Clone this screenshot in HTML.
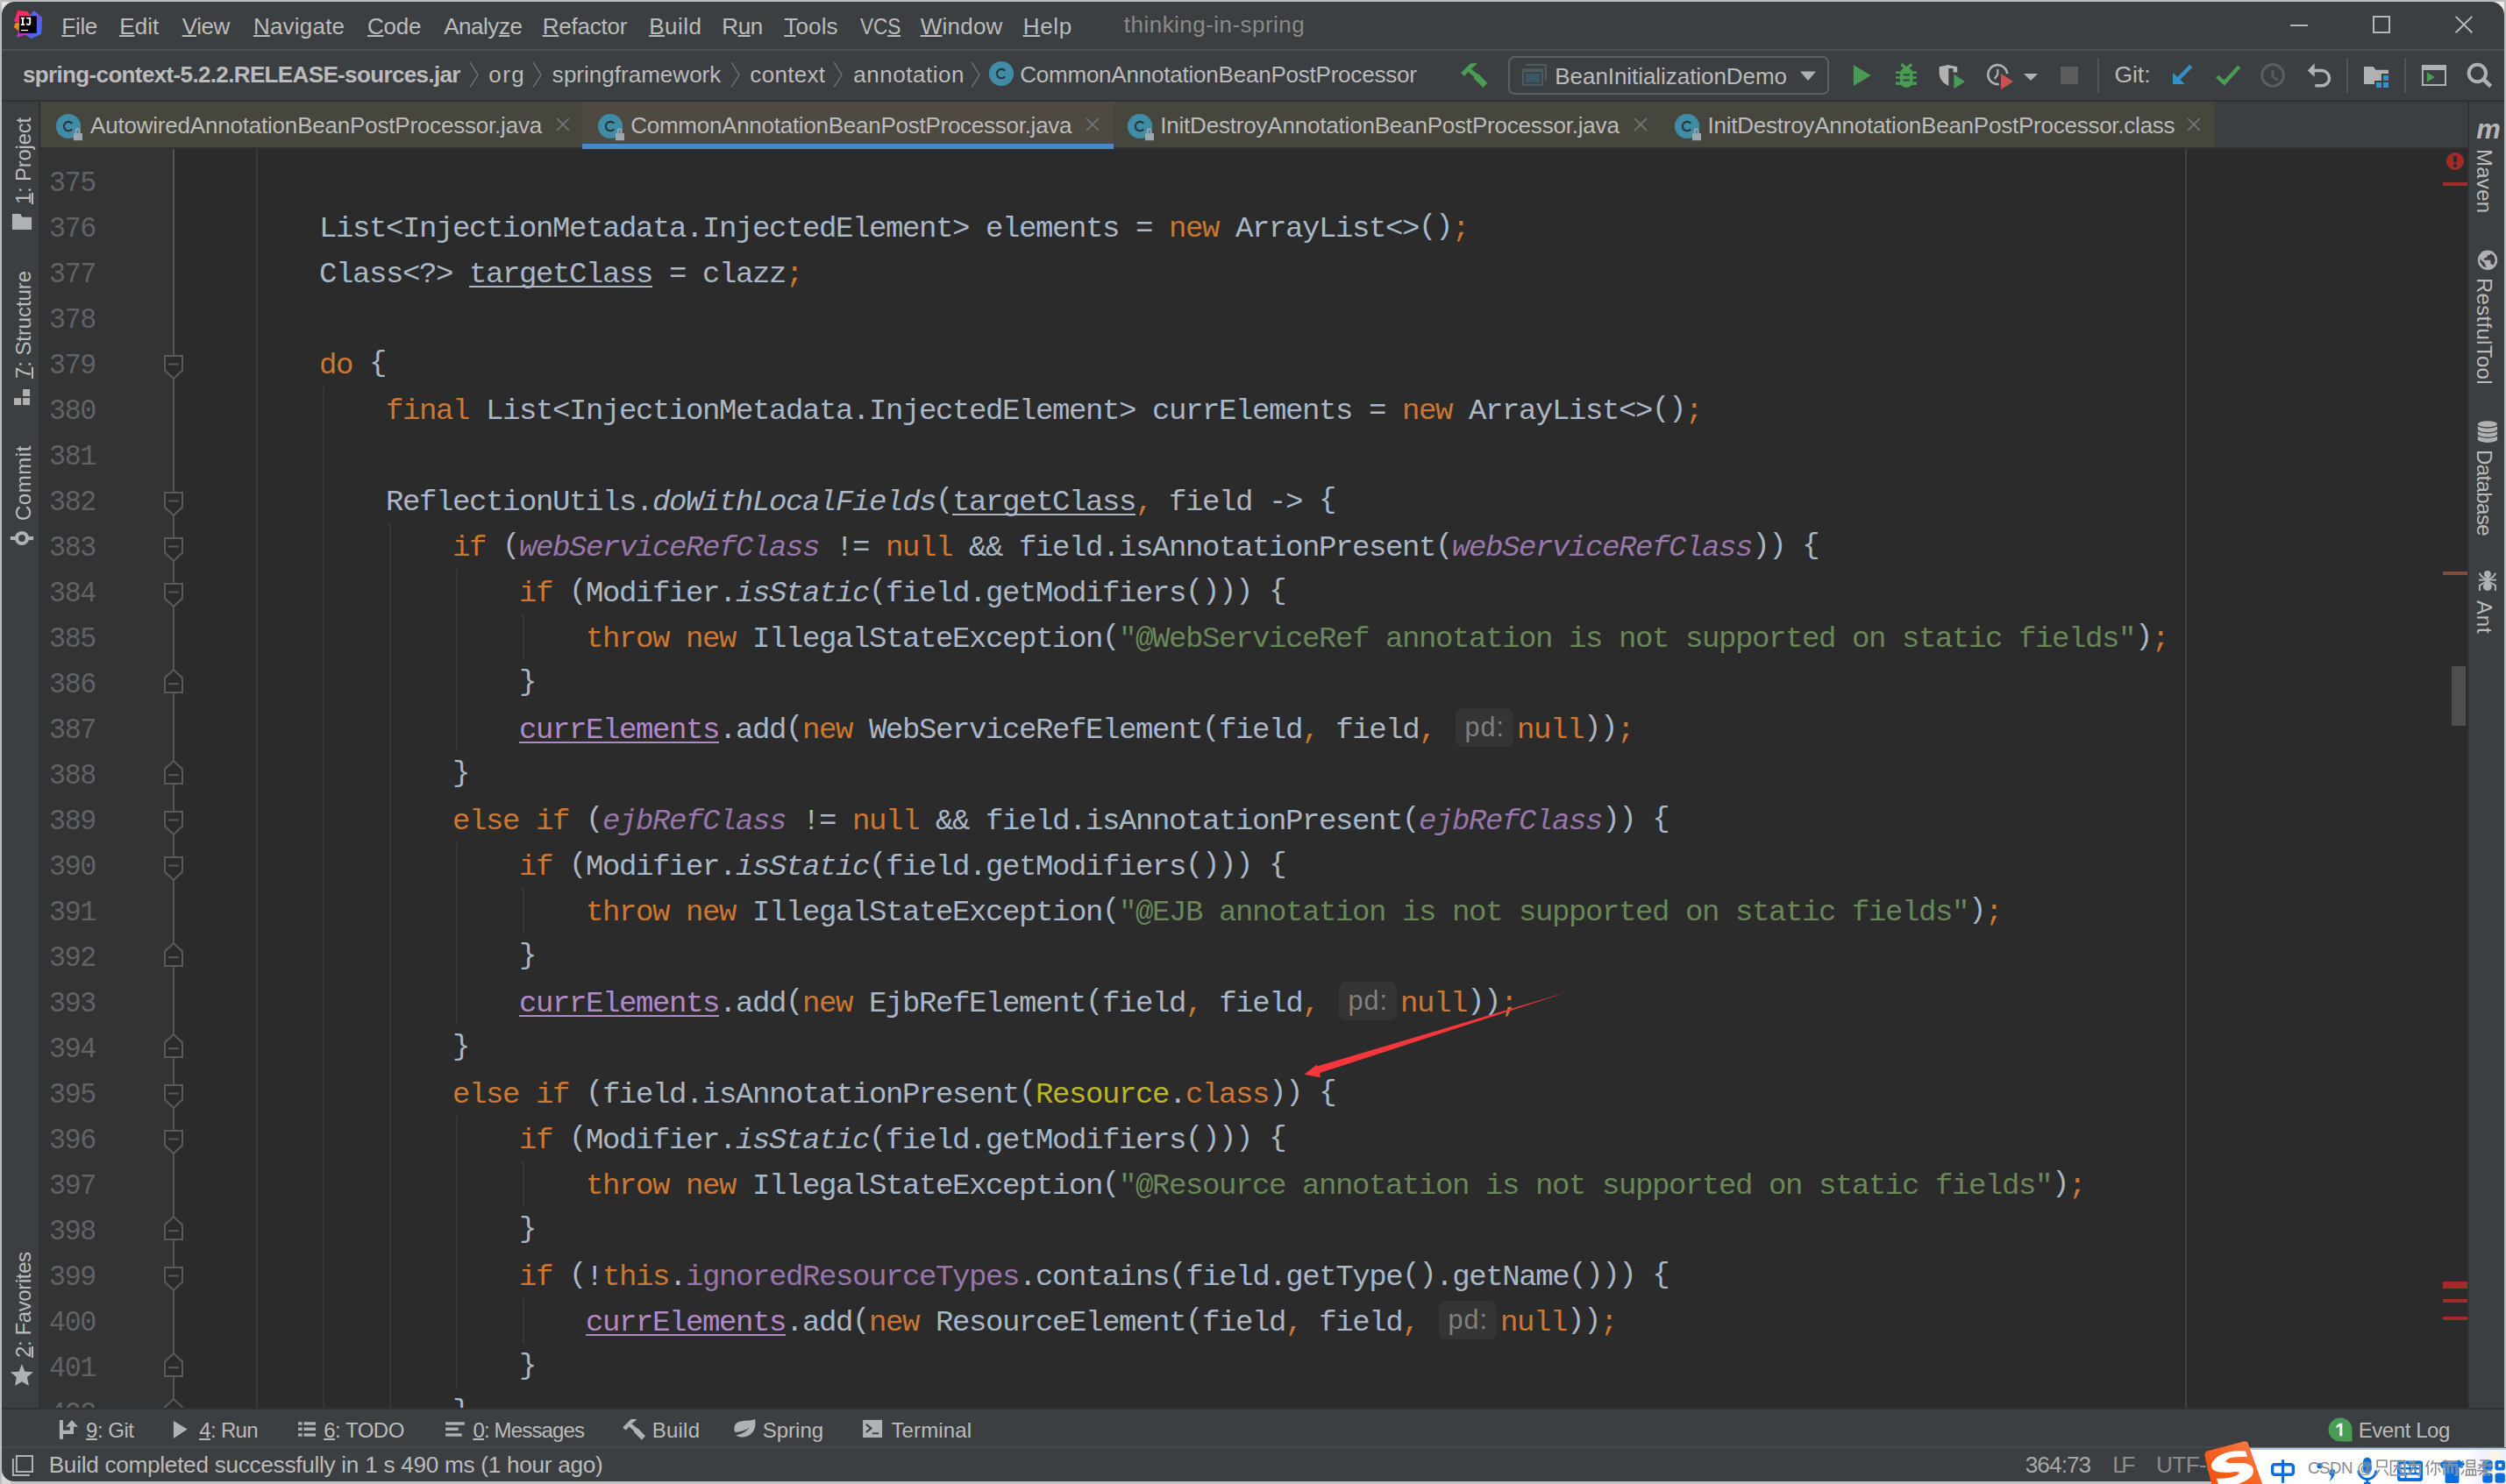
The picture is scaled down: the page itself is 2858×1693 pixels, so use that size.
<!DOCTYPE html>
<html><head><meta charset="utf-8"><title>IntelliJ IDEA</title>
<style>
html,body{margin:0;padding:0;}
body{width:2858px;height:1693px;overflow:hidden;background:#c4c4c4;position:relative;font-family:'Liberation Sans', sans-serif;}
#win{position:absolute;left:0;top:0;width:2858px;height:1693px;overflow:hidden;}
.t u{text-decoration:underline;text-decoration-thickness:2px;text-underline-offset:1px;text-decoration-skip-ink:none;}
.cl{position:absolute;height:52px;line-height:52px;font-family:'Liberation Mono', monospace;font-size:34px;letter-spacing:-1.4033px;white-space:pre;color:#a9b7c6;}
.cl i{font-style:italic;} .cl b{font-weight:400;position:relative;top:-3px;}
.k{color:#cc7832;} .s{color:#6a8759;} .f{color:#9876aa;} .a{color:#bbb529;}
.u{text-decoration:underline;text-decoration-thickness:1.700px;text-underline-offset:4px;text-decoration-skip-ink:none;}
.p{color:#b389c5;}
.ln{position:absolute;left:56px;height:52px;transform:scaleX(0.93);transform-origin:0 0;line-height:52px;font-family:'Liberation Mono', monospace;font-size:34px;letter-spacing:-1.4033px;color:#606366;}
.hint{position:absolute;height:44px;border-radius:8px;background:#343434;color:#808080;font-family:'Liberation Sans', sans-serif;font-size:30.500px;line-height:43px;text-align:center;letter-spacing:1px;text-indent:1px;}
</style></head><body>
<div id="win">
<div style="position:absolute;left:0px;top:0px;width:14px;height:14px;background:#e4e4e4;"></div>
<div style="position:absolute;left:2844px;top:0px;width:14px;height:14px;background:#ececec;"></div>
<div style="position:absolute;left:0px;top:1679px;width:12px;height:14px;background:#d8d8d8;"></div>
<div style="position:absolute;left:2px;top:2px;width:2854px;height:1688px;background:#3c3f41;border-radius:15px 15px 14px 14px;"></div>
<div style="position:absolute;left:0px;top:0px;width:2px;height:1693px;background:#bdbdbd;"></div>
<div style="position:absolute;left:0px;top:0px;width:2858px;height:2px;background:#bcbcbc;"></div>
<div style="position:absolute;left:2px;top:56px;width:2854px;height:2px;background:#515151;"></div>
<div style="position:absolute;left:2px;top:114px;width:2854px;height:2px;background:#323232;"></div>
<div style="position:absolute;left:46px;top:116px;width:2480px;height:54px;background:#46463f;"></div>
<div style="position:absolute;left:664px;top:116px;width:606px;height:54px;background:#4e4a41;"></div>
<div style="position:absolute;left:46px;top:168px;width:2768px;height:2px;background:#323232;"></div>
<div style="position:absolute;left:664px;top:164px;width:606px;height:6px;background:#4a88c7;"></div>
<div style="position:absolute;left:46px;top:170px;width:2768px;height:1436px;background:#2b2b2b;"></div>
<div style="position:absolute;left:46px;top:170px;width:151px;height:1436px;background:#313335;"></div>
<div style="position:absolute;left:44px;top:116px;width:2px;height:1490px;background:#323232;"></div>
<div style="position:absolute;left:2814px;top:116px;width:2px;height:1490px;background:#323232;"></div>
<div style="position:absolute;left:2px;top:1606px;width:2854px;height:2px;background:#323232;"></div>
<div style="position:absolute;left:2px;top:1650px;width:2854px;height:2px;background:#484848;"></div>
<div style="position:absolute;left:46px;top:170px;width:2768px;height:1436px;overflow:hidden;">
<div style="position:absolute;left:2446px;top:0px;width:2px;height:1436px;background:#424242;"></div>
<div style="position:absolute;left:151px;top:0px;width:2px;height:1436px;background:#555555;"></div>
<div style="position:absolute;left:246px;top:-249px;width:2px;height:2132px;background:#3a3a3a;"></div>
<div style="position:absolute;left:322px;top:271px;width:2px;height:1612px;background:#373737;"></div>
<div style="position:absolute;left:398px;top:427px;width:2px;height:1456px;background:#373737;"></div>
<div style="position:absolute;left:474px;top:479px;width:2px;height:208px;background:#373737;"></div>
<div style="position:absolute;left:474px;top:791px;width:2px;height:208px;background:#373737;"></div>
<div style="position:absolute;left:474px;top:1103px;width:2px;height:312px;background:#373737;"></div>
<div style="position:absolute;left:550px;top:531px;width:2px;height:52px;background:#373737;"></div>
<div style="position:absolute;left:550px;top:843px;width:2px;height:52px;background:#373737;"></div>
<div style="position:absolute;left:550px;top:1155px;width:2px;height:52px;background:#373737;"></div>
<div style="position:absolute;left:550px;top:1311px;width:2px;height:52px;background:#373737;"></div>
<div class="ln" style="top:13px;left:10.200000000000003px">375</div>
<div class="ln" style="top:65px;left:10.200000000000003px">376</div>
<div class="ln" style="top:117px;left:10.200000000000003px">377</div>
<div class="ln" style="top:169px;left:10.200000000000003px">378</div>
<div class="ln" style="top:221px;left:10.200000000000003px">379</div>
<div class="ln" style="top:273px;left:10.200000000000003px">380</div>
<div class="ln" style="top:325px;left:10.200000000000003px">381</div>
<div class="ln" style="top:377px;left:10.200000000000003px">382</div>
<div class="ln" style="top:429px;left:10.200000000000003px">383</div>
<div class="ln" style="top:481px;left:10.200000000000003px">384</div>
<div class="ln" style="top:533px;left:10.200000000000003px">385</div>
<div class="ln" style="top:585px;left:10.200000000000003px">386</div>
<div class="ln" style="top:637px;left:10.200000000000003px">387</div>
<div class="ln" style="top:689px;left:10.200000000000003px">388</div>
<div class="ln" style="top:741px;left:10.200000000000003px">389</div>
<div class="ln" style="top:793px;left:10.200000000000003px">390</div>
<div class="ln" style="top:845px;left:10.200000000000003px">391</div>
<div class="ln" style="top:897px;left:10.200000000000003px">392</div>
<div class="ln" style="top:949px;left:10.200000000000003px">393</div>
<div class="ln" style="top:1001px;left:10.200000000000003px">394</div>
<div class="ln" style="top:1053px;left:10.200000000000003px">395</div>
<div class="ln" style="top:1105px;left:10.200000000000003px">396</div>
<div class="ln" style="top:1157px;left:10.200000000000003px">397</div>
<div class="ln" style="top:1209px;left:10.200000000000003px">398</div>
<div class="ln" style="top:1261px;left:10.200000000000003px">399</div>
<div class="ln" style="top:1313px;left:10.200000000000003px">400</div>
<div class="ln" style="top:1365px;left:10.200000000000003px">401</div>
<div class="ln" style="top:1417px;left:10.200000000000003px">402</div>
<svg style="position:absolute;left:141px;top:235px;" width="22" height="29" viewBox="0 0 22 29"><polygon points="1,1 21,1 21,17.5 11,27 1,17.5" fill="#2b2b2b" stroke="#5a5a5a" stroke-width="2"/><rect x="5.200" y="9.500" width="11.600" height="2" fill="#5a5a5a"/></svg>
<svg style="position:absolute;left:141px;top:391px;" width="22" height="29" viewBox="0 0 22 29"><polygon points="1,1 21,1 21,17.5 11,27 1,17.5" fill="#2b2b2b" stroke="#5a5a5a" stroke-width="2"/><rect x="5.200" y="9.500" width="11.600" height="2" fill="#5a5a5a"/></svg>
<svg style="position:absolute;left:141px;top:443px;" width="22" height="29" viewBox="0 0 22 29"><polygon points="1,1 21,1 21,17.5 11,27 1,17.5" fill="#2b2b2b" stroke="#5a5a5a" stroke-width="2"/><rect x="5.200" y="9.500" width="11.600" height="2" fill="#5a5a5a"/></svg>
<svg style="position:absolute;left:141px;top:495px;" width="22" height="29" viewBox="0 0 22 29"><polygon points="1,1 21,1 21,17.5 11,27 1,17.5" fill="#2b2b2b" stroke="#5a5a5a" stroke-width="2"/><rect x="5.200" y="9.500" width="11.600" height="2" fill="#5a5a5a"/></svg>
<svg style="position:absolute;left:141px;top:755px;" width="22" height="29" viewBox="0 0 22 29"><polygon points="1,1 21,1 21,17.5 11,27 1,17.5" fill="#2b2b2b" stroke="#5a5a5a" stroke-width="2"/><rect x="5.200" y="9.500" width="11.600" height="2" fill="#5a5a5a"/></svg>
<svg style="position:absolute;left:141px;top:807px;" width="22" height="29" viewBox="0 0 22 29"><polygon points="1,1 21,1 21,17.5 11,27 1,17.5" fill="#2b2b2b" stroke="#5a5a5a" stroke-width="2"/><rect x="5.200" y="9.500" width="11.600" height="2" fill="#5a5a5a"/></svg>
<svg style="position:absolute;left:141px;top:1067px;" width="22" height="29" viewBox="0 0 22 29"><polygon points="1,1 21,1 21,17.5 11,27 1,17.5" fill="#2b2b2b" stroke="#5a5a5a" stroke-width="2"/><rect x="5.200" y="9.500" width="11.600" height="2" fill="#5a5a5a"/></svg>
<svg style="position:absolute;left:141px;top:1119px;" width="22" height="29" viewBox="0 0 22 29"><polygon points="1,1 21,1 21,17.5 11,27 1,17.5" fill="#2b2b2b" stroke="#5a5a5a" stroke-width="2"/><rect x="5.200" y="9.500" width="11.600" height="2" fill="#5a5a5a"/></svg>
<svg style="position:absolute;left:141px;top:1275px;" width="22" height="29" viewBox="0 0 22 29"><polygon points="1,1 21,1 21,17.5 11,27 1,17.5" fill="#2b2b2b" stroke="#5a5a5a" stroke-width="2"/><rect x="5.200" y="9.500" width="11.600" height="2" fill="#5a5a5a"/></svg>
<svg style="position:absolute;left:141px;top:592.5px;" width="22" height="29" viewBox="0 0 22 29"><polygon points="11,1 21,10.5 21,27 1,27 1,10.5" fill="#2b2b2b" stroke="#5a5a5a" stroke-width="2"/><rect x="5.200" y="16.200" width="11.600" height="2" fill="#5a5a5a"/></svg>
<svg style="position:absolute;left:141px;top:696.5px;" width="22" height="29" viewBox="0 0 22 29"><polygon points="11,1 21,10.5 21,27 1,27 1,10.5" fill="#2b2b2b" stroke="#5a5a5a" stroke-width="2"/><rect x="5.200" y="16.200" width="11.600" height="2" fill="#5a5a5a"/></svg>
<svg style="position:absolute;left:141px;top:904.5px;" width="22" height="29" viewBox="0 0 22 29"><polygon points="11,1 21,10.5 21,27 1,27 1,10.5" fill="#2b2b2b" stroke="#5a5a5a" stroke-width="2"/><rect x="5.200" y="16.200" width="11.600" height="2" fill="#5a5a5a"/></svg>
<svg style="position:absolute;left:141px;top:1008.5px;" width="22" height="29" viewBox="0 0 22 29"><polygon points="11,1 21,10.5 21,27 1,27 1,10.5" fill="#2b2b2b" stroke="#5a5a5a" stroke-width="2"/><rect x="5.200" y="16.200" width="11.600" height="2" fill="#5a5a5a"/></svg>
<svg style="position:absolute;left:141px;top:1216.5px;" width="22" height="29" viewBox="0 0 22 29"><polygon points="11,1 21,10.5 21,27 1,27 1,10.5" fill="#2b2b2b" stroke="#5a5a5a" stroke-width="2"/><rect x="5.200" y="16.200" width="11.600" height="2" fill="#5a5a5a"/></svg>
<svg style="position:absolute;left:141px;top:1372.5px;" width="22" height="29" viewBox="0 0 22 29"><polygon points="11,1 21,10.5 21,27 1,27 1,10.5" fill="#2b2b2b" stroke="#5a5a5a" stroke-width="2"/><rect x="5.200" y="16.200" width="11.600" height="2" fill="#5a5a5a"/></svg>
<svg style="position:absolute;left:141px;top:1424.5px;" width="22" height="29" viewBox="0 0 22 29"><polygon points="11,1 21,10.5 21,27 1,27 1,10.5" fill="#2b2b2b" stroke="#5a5a5a" stroke-width="2"/><rect x="5.200" y="16.200" width="11.600" height="2" fill="#5a5a5a"/></svg>
<div class="cl" style="left:318px;top:65px">List&lt;InjectionMetadata.InjectedElement&gt; elements = <span class="k">new </span>ArrayList&lt;&gt;<b>()</b><span class="k">;</span></div>
<div class="cl" style="left:318px;top:117px">Class&lt;?&gt; <span class="u">targetClass</span> = clazz<span class="k">;</span></div>
<div class="cl" style="left:318px;top:221px"><span class="k">do </span><b>{</b></div>
<div class="cl" style="left:394px;top:273px"><span class="k">final </span>List&lt;InjectionMetadata.InjectedElement&gt; currElements = <span class="k">new </span>ArrayList&lt;&gt;<b>()</b><span class="k">;</span></div>
<div class="cl" style="left:394px;top:377px">ReflectionUtils.<i>doWithLocalFields</i><b>(</b><span class="u">targetClass</span><span class="k">,</span> field -&gt; <b>{</b></div>
<div class="cl" style="left:470px;top:429px"><span class="k">if </span><b>(</b><i class="f">webServiceRefClass</i> != <span class="k">null</span> &amp;&amp; field.isAnnotationPresent<b>(</b><i class="f">webServiceRefClass</i><b>))</b> <b>{</b></div>
<div class="cl" style="left:546px;top:481px"><span class="k">if </span><b>(</b>Modifier.<i>isStatic</i><b>(</b>field.getModifiers<b>()))</b> <b>{</b></div>
<div class="cl" style="left:622px;top:533px"><span class="k">throw new </span>IllegalStateException<b>(</b><span class="s">"@WebServiceRef annotation is not supported on static fields"</span><b>)</b><span class="k">;</span></div>
<div class="cl" style="left:546px;top:585px"><b>}</b></div>
<div class="cl" style="left:546px;top:637px"><span class="p u">currElements</span>.add<b>(</b><span class="k">new </span>WebServiceRefElement<b>(</b>field<span class="k">,</span> field<span class="k">,</span> </div>
<div class="hint" style="left:1614px;top:638px;width:65.600px;">pd:</div>
<div class="cl" style="left:1684px;top:637px"><span class="k">null</span><b>))</b><span class="k">;</span></div>
<div class="cl" style="left:470px;top:689px"><b>}</b></div>
<div class="cl" style="left:470px;top:741px"><span class="k">else if </span><b>(</b><i class="f">ejbRefClass</i> != <span class="k">null</span> &amp;&amp; field.isAnnotationPresent<b>(</b><i class="f">ejbRefClass</i><b>))</b> <b>{</b></div>
<div class="cl" style="left:546px;top:793px"><span class="k">if </span><b>(</b>Modifier.<i>isStatic</i><b>(</b>field.getModifiers<b>()))</b> <b>{</b></div>
<div class="cl" style="left:622px;top:845px"><span class="k">throw new </span>IllegalStateException<b>(</b><span class="s">"@EJB annotation is not supported on static fields"</span><b>)</b><span class="k">;</span></div>
<div class="cl" style="left:546px;top:897px"><b>}</b></div>
<div class="cl" style="left:546px;top:949px"><span class="p u">currElements</span>.add<b>(</b><span class="k">new </span>EjbRefElement<b>(</b>field<span class="k">,</span> field<span class="k">,</span> </div>
<div class="hint" style="left:1481px;top:950px;width:65.600px;">pd:</div>
<div class="cl" style="left:1551px;top:949px"><span class="k">null</span><b>))</b><span class="k">;</span></div>
<div class="cl" style="left:470px;top:1001px"><b>}</b></div>
<div class="cl" style="left:470px;top:1053px"><span class="k">else if </span><b>(</b>field.isAnnotationPresent<b>(</b><span class="a">Resource</span>.<span class="k">class</span><b>))</b> <b>{</b></div>
<div class="cl" style="left:546px;top:1105px"><span class="k">if </span><b>(</b>Modifier.<i>isStatic</i><b>(</b>field.getModifiers<b>()))</b> <b>{</b></div>
<div class="cl" style="left:622px;top:1157px"><span class="k">throw new </span>IllegalStateException<b>(</b><span class="s">"@Resource annotation is not supported on static fields"</span><b>)</b><span class="k">;</span></div>
<div class="cl" style="left:546px;top:1209px"><b>}</b></div>
<div class="cl" style="left:546px;top:1261px"><span class="k">if </span><b>(</b>!<span class="k">this</span>.<span class="f">ignoredResourceTypes</span>.contains<b>(</b>field.getType<b>()</b>.getName<b>()))</b> <b>{</b></div>
<div class="cl" style="left:622px;top:1313px"><span class="p u">currElements</span>.add<b>(</b><span class="k">new </span>ResourceElement<b>(</b>field<span class="k">,</span> field<span class="k">,</span> </div>
<div class="hint" style="left:1595px;top:1314px;width:65.600px;">pd:</div>
<div class="cl" style="left:1665px;top:1313px"><span class="k">null</span><b>))</b><span class="k">;</span></div>
<div class="cl" style="left:546px;top:1365px"><b>}</b></div>
<div class="cl" style="left:470px;top:1417px"><b>}</b></div>
<svg style="position:absolute;left:1434px;top:955px;" width="320" height="115" viewBox="0 0 320 115"><polygon points="307,7 22.8,91.3 21.4,89.7 7.4,100.7 25.7,104.3 25.3,99.1" fill="#f5373c"/></svg>
<svg style="position:absolute;left:2743px;top:3px;" width="22" height="22" viewBox="0 0 22 22"><circle cx="11" cy="10.900" r="10" fill="#a22a2a"/><rect x="9" y="5" width="4" height="6.700" fill="#2b2b2b"/><rect x="9" y="13.700" width="4" height="4.100" fill="#2b2b2b"/></svg>
<div style="position:absolute;left:2740px;top:38px;width:28px;height:4px;background:#a42a2a;"></div>
<div style="position:absolute;left:2740px;top:482px;width:28px;height:4px;background:#7e4d3b;"></div>
<div style="position:absolute;left:2740px;top:1292px;width:28px;height:8px;background:#a42a2a;"></div>
<div style="position:absolute;left:2740px;top:1312px;width:28px;height:4px;background:#a42a2a;"></div>
<div style="position:absolute;left:2740px;top:1332px;width:28px;height:4px;background:#a42a2a;"></div>
<div style="position:absolute;left:2750px;top:590px;width:16px;height:68px;background:#4e4e4e;"></div>
</div>
<svg style="position:absolute;left:12px;top:8px;" width="40" height="40" viewBox="0 0 40 40">
<defs>
<linearGradient id="lgb" x1="0" y1="0" x2="1" y2="1"><stop offset="0" stop-color="#2f7df0"/><stop offset="0.5" stop-color="#6a55e0"/><stop offset="1" stop-color="#2b7ff2"/></linearGradient>
<linearGradient id="lgp" x1="0" y1="0" x2="0" y2="1"><stop offset="0" stop-color="#ff2658"/><stop offset="1" stop-color="#e8308a"/></linearGradient>
<linearGradient id="lgm" x1="0" y1="0" x2="1" y2="0"><stop offset="0" stop-color="#a838c8"/><stop offset="1" stop-color="#d238b0"/></linearGradient>
</defs>
<polygon points="8.2,3.9 19.1,5.1 23.2,9.8 23,18 10,18 6.6,17 4,16.3" fill="url(#lgp)"/>
<polygon points="5.8,18.1 3.8,22.7 9.2,27.4 10.2,18.3" fill="#fb8618"/>
<polygon points="26.4,3.9 36.1,11.8 35.1,30.8 23.6,36.1 16.9,31.2 22.8,8.6" fill="url(#lgb)"/>
<polygon points="9.4,27.2 6.8,35 19.5,30.4 20,27" fill="url(#lgm)"/>
<rect x="10.2" y="10.3" width="19.6" height="19.6" fill="#000"/>
<rect x="11.9" y="25.9" width="8.2" height="1.3" fill="#fff"/>
<path d="M11.8 11.8h4.3v1.6h-1.2v5.9h1.2v1.6h-4.3v-1.6h1.2v-5.9h-1.2z M18.2 11.8h5v6.1c0 2-1.1 3.1-2.9 3.1c-1.3 0-2.2-.6-2.8-1.4l1.3-1.3c.4.5.8.8 1.4.8c.7 0 1.1-.4 1.1-1.4v-4.3h-3.1z" fill="#fff"/>
</svg>
<div class="t" style="font-family:'Liberation Sans', sans-serif;font-size:26px;line-height:31.20px;color:#bbbbbb;letter-spacing:-0.304px;white-space:pre;position:absolute;left:70.33px;top:14.69px;"><u>F</u>ile</div>
<div class="t" style="font-family:'Liberation Sans', sans-serif;font-size:26px;line-height:31.20px;color:#bbbbbb;letter-spacing:0.131px;white-space:pre;position:absolute;left:136.15px;top:14.69px;"><u>E</u>dit</div>
<div class="t" style="font-family:'Liberation Sans', sans-serif;font-size:26px;line-height:31.20px;color:#bbbbbb;letter-spacing:-0.467px;white-space:pre;position:absolute;left:207.74px;top:14.69px;"><u>V</u>iew</div>
<div class="t" style="font-family:'Liberation Sans', sans-serif;font-size:26px;line-height:31.20px;color:#bbbbbb;letter-spacing:0.210px;white-space:pre;position:absolute;left:288.93px;top:14.69px;"><u>N</u>avigate</div>
<div class="t" style="font-family:'Liberation Sans', sans-serif;font-size:26px;line-height:31.20px;color:#bbbbbb;letter-spacing:-0.256px;white-space:pre;position:absolute;left:418.94px;top:14.69px;"><u>C</u>ode</div>
<div class="t" style="font-family:'Liberation Sans', sans-serif;font-size:26px;line-height:31.20px;color:#bbbbbb;letter-spacing:-0.456px;white-space:pre;position:absolute;left:506.15px;top:14.69px;">Analy<u>z</u>e</div>
<div class="t" style="font-family:'Liberation Sans', sans-serif;font-size:26px;line-height:31.20px;color:#bbbbbb;letter-spacing:-0.205px;white-space:pre;position:absolute;left:618.67px;top:14.69px;"><u>R</u>efactor</div>
<div class="t" style="font-family:'Liberation Sans', sans-serif;font-size:26px;line-height:31.20px;color:#bbbbbb;letter-spacing:0.481px;white-space:pre;position:absolute;left:740.15px;top:14.69px;"><u>B</u>uild</div>
<div class="t" style="font-family:'Liberation Sans', sans-serif;font-size:26px;line-height:31.20px;color:#bbbbbb;letter-spacing:-0.466px;white-space:pre;position:absolute;left:823.32px;top:14.69px;">R<u>u</u>n</div>
<div class="t" style="font-family:'Liberation Sans', sans-serif;font-size:26px;line-height:31.20px;color:#bbbbbb;letter-spacing:0.139px;white-space:pre;position:absolute;left:894.31px;top:14.69px;"><u>T</u>ools</div>
<div class="t" style="font-family:'Liberation Sans', sans-serif;font-size:26px;line-height:31.20px;color:#bbbbbb;letter-spacing:-0.172px;white-space:pre;position:absolute;left:980.76px;top:14.69px;transform:scaleX(0.87);transform-origin:0 0;">VC<u>S</u></div>
<div class="t" style="font-family:'Liberation Sans', sans-serif;font-size:26px;line-height:31.20px;color:#bbbbbb;letter-spacing:0.243px;white-space:pre;position:absolute;left:1049.70px;top:14.69px;"><u>W</u>indow</div>
<div class="t" style="font-family:'Liberation Sans', sans-serif;font-size:26px;line-height:31.20px;color:#bbbbbb;letter-spacing:0.719px;white-space:pre;position:absolute;left:1166.67px;top:14.69px;"><u>H</u>elp</div>
<div class="t" style="font-family:'Liberation Sans', sans-serif;font-size:26px;line-height:31.20px;color:#8a8a8a;letter-spacing:0.464px;white-space:pre;position:absolute;left:1281.86px;top:13.19px;">thinking-in-spring</div>
<div style="position:absolute;left:2612px;top:28px;width:20px;height:2px;background:#b9b9b9;"></div>
<div style="position:absolute;left:2706px;top:18px;width:16px;height:16px;border:2px solid #b9b9b9;"></div>
<svg style="position:absolute;left:2798px;top:16px;" width="24" height="24" viewBox="2798 16 24 24"><path d="M2800.700 18.900L2819.300 37.300M2819.300 18.900L2800.700 37.300" stroke="#b9b9b9" stroke-width="2" fill="none"/></svg>
<div class="t" style="font-family:'Liberation Sans', sans-serif;font-size:26px;line-height:31.20px;color:#bbbbbb;letter-spacing:-0.640px;white-space:pre;position:absolute;font-weight:700;left:25.95px;top:69.89px;">spring-context-5.2.2.RELEASE-sources.jar</div>
<svg style="position:absolute;left:534.5px;top:70px;" width="12" height="31" viewBox="0 0 12 31"><path d="M1.200 1.200L10 15.300L1.200 29.400" stroke="#6c6e6f" stroke-width="1.500" fill="none"/></svg>
<div class="t" style="font-family:'Liberation Sans', sans-serif;font-size:26px;line-height:31.20px;color:#bbbbbb;letter-spacing:1.510px;white-space:pre;position:absolute;left:557.23px;top:69.89px;">org</div>
<svg style="position:absolute;left:606.6px;top:70px;" width="12" height="31" viewBox="0 0 12 31"><path d="M1.200 1.200L10 15.300L1.200 29.400" stroke="#6c6e6f" stroke-width="1.500" fill="none"/></svg>
<div class="t" style="font-family:'Liberation Sans', sans-serif;font-size:26px;line-height:31.20px;color:#bbbbbb;letter-spacing:0.018px;white-space:pre;position:absolute;left:629.87px;top:69.89px;">springframework</div>
<svg style="position:absolute;left:832.5px;top:70px;" width="12" height="31" viewBox="0 0 12 31"><path d="M1.200 1.200L10 15.300L1.200 29.400" stroke="#6c6e6f" stroke-width="1.500" fill="none"/></svg>
<div class="t" style="font-family:'Liberation Sans', sans-serif;font-size:26px;line-height:31.20px;color:#bbbbbb;letter-spacing:0.315px;white-space:pre;position:absolute;left:855.35px;top:69.89px;">context</div>
<svg style="position:absolute;left:950px;top:70px;" width="12" height="31" viewBox="0 0 12 31"><path d="M1.200 1.200L10 15.300L1.200 29.400" stroke="#6c6e6f" stroke-width="1.500" fill="none"/></svg>
<div class="t" style="font-family:'Liberation Sans', sans-serif;font-size:26px;line-height:31.20px;color:#bbbbbb;letter-spacing:0.514px;white-space:pre;position:absolute;left:973.34px;top:69.89px;">annotation</div>
<svg style="position:absolute;left:1107.4px;top:70px;" width="12" height="31" viewBox="0 0 12 31"><path d="M1.200 1.200L10 15.300L1.200 29.400" stroke="#6c6e6f" stroke-width="1.500" fill="none"/></svg>
<svg style="position:absolute;left:1125px;top:67px;" width="34" height="34" viewBox="0 0 34 34"><circle cx="17" cy="17" r="14.1" fill="#408ba5"/><path d="M21.200 13.900A5.200 5.200 0 1 0 21.200 20.300" stroke="#23373f" stroke-width="2.100" fill="none"/></svg>
<div class="t" style="font-family:'Liberation Sans', sans-serif;font-size:26px;line-height:31.20px;color:#bbbbbb;letter-spacing:-0.216px;white-space:pre;position:absolute;left:1163.20px;top:69.89px;">CommonAnnotationBeanPostProcessor</div>
<svg style="position:absolute;left:1660px;top:66px;" width="42" height="40" viewBox="1660 66 42 40"><polygon points="1666,83.2 1677.1,72.2 1684,72 1684,73.6 1677.8,78.4 1684.5,83.9 1686.9,84.9 1696.2,94.7 1691.4,100 1680.9,89.5 1681.1,87.8 1674.4,82 1670.4,87.1" fill="#499c54"/></svg>
<div style="position:absolute;left:1720px;top:64px;width:362px;height:40px;border:2px solid #5e6061;border-radius:7px;"></div>
<svg style="position:absolute;left:1734px;top:70px;" width="34" height="30" viewBox="1734 70 34 30"><path d="M1740 74h22.900v17.800" stroke="#4e5a5f" stroke-width="2.200" fill="none"/><rect x="1736" y="78.200" width="24" height="19.600" fill="#4e5a5f"/><rect x="1738" y="82.300" width="19.800" height="13.400" fill="#3c3f41"/><rect x="1740" y="84" width="16" height="10" fill="#3a5966"/></svg>
<div class="t" style="font-family:'Liberation Sans', sans-serif;font-size:26px;line-height:31.20px;color:#bbbbbb;letter-spacing:-0.059px;white-space:pre;position:absolute;left:1773.32px;top:72.19px;">BeanInitializationDemo</div>
<svg style="position:absolute;left:2050px;top:80px;" width="24" height="14" viewBox="2050 80 24 14"><polygon points="2053,81.600 2071,81.600 2062,91.900" fill="#aeb0b2"/></svg>
<svg style="position:absolute;left:2110px;top:70px;" width="28" height="32" viewBox="2110 70 28 32"><polygon points="2113.900,73.900 2133.500,85.900 2113.900,98" fill="#499c54"/></svg>
<svg style="position:absolute;left:2158px;top:68px;" width="32" height="36" viewBox="2158 68 32 36"><g fill="#499c54">
<path d="M2167 83.500a7.200 6.500 0 0 1 14.400 0v9.800a7.200 6.500 0 0 1 -14.400 0z"/>
<rect x="2162" y="81.500" width="24" height="2.500"/><rect x="2162" y="87.300" width="24" height="2.500"/><rect x="2162" y="93.500" width="24" height="3.300"/>
</g>
<path d="M2168.300 73.200l5.500 4.800M2180.100 73.200l-5.500 4.800" stroke="#499c54" stroke-width="3.400" fill="none"/>
<rect x="2170.400" y="84.400" width="7.600" height="2" fill="#3c3f41"/><rect x="2170.400" y="90.500" width="7.600" height="2" fill="#3c3f41"/></svg>
<svg style="position:absolute;left:2208px;top:70px;" width="38" height="36" viewBox="2208 70 38 36"><path d="M2211.600 76.200l10.300-2.300 10.300 2.300v6c0 7.500-4 12.500-10.300 15.600c-6.300-3.100-10.300-8.100-10.300-15.600z" fill="#afb1b3"/>
<path d="M2222.300 78h5.200v4.500h4.700v16h-9.900z" fill="#3c3f41"/>
<polygon points="2227.900,83.900 2241.800,93 2227.900,102.100" fill="#499c54" stroke="#3c3f41" stroke-width="1"/></svg>
<svg style="position:absolute;left:2262px;top:68px;" width="38" height="38" viewBox="2262 68 38 38"><path d="M2289.200 84.200a11 11 0 1 0 -9.500 11.800" stroke="#afb1b3" stroke-width="2.600" fill="none"/>
<path d="M2278.300 79v6l-3.600 5" stroke="#afb1b3" stroke-width="2.200" fill="none"/>
<polygon points="2282,83.900 2295.900,93 2282,102.100" fill="#c75450"/></svg>
<svg style="position:absolute;left:2305px;top:82px;" width="22" height="12" viewBox="2305 82 22 12"><polygon points="2307.900,83.900 2324.100,83.900 2316,92.100" fill="#aeb0b2"/></svg>
<div style="position:absolute;left:2350px;top:76px;width:20px;height:20px;background:#5c5c5c;"></div>
<div style="position:absolute;left:2392px;top:66px;width:2px;height:40px;background:#515355;"></div>
<div class="t" style="font-family:'Liberation Sans', sans-serif;font-size:26.5px;line-height:31.80px;color:#bbbbbb;letter-spacing:-0.015px;white-space:pre;position:absolute;left:2411.39px;top:69.82px;">Git:</div>
<svg style="position:absolute;left:2474px;top:70px;" width="30" height="30" viewBox="2474 70 30 30"><path d="M2498.800 75.200L2484 90.300" stroke="#3592c4" stroke-width="4.400" fill="none"/><polygon points="2478,82.800 2478,96 2491.700,96" fill="#3592c4"/></svg>
<svg style="position:absolute;left:2524px;top:70px;" width="34" height="30" viewBox="2524 70 34 30"><path d="M2528.600 87.100l8.100 7.500 17-18.600" stroke="#499c54" stroke-width="4.400" fill="none"/></svg>
<svg style="position:absolute;left:2575px;top:69px;" width="34" height="34" viewBox="2575 69 34 34"><circle cx="2592" cy="86" r="12.300" stroke="#5a5c5d" stroke-width="3.300" fill="none"/><path d="M2592 79.700v7.400l5.800 4.400" stroke="#5a5c5d" stroke-width="3" fill="none"/></svg>
<svg style="position:absolute;left:2628px;top:68px;" width="34" height="34" viewBox="2628 68 34 34"><path d="M2639 80.600h8.900a8.600 8.600 0 0 1 0 17.200h-7.600" stroke="#afb1b3" stroke-width="3.500" fill="none"/><polygon points="2631.700,80.600 2639.600,72.200 2639.600,87.800" fill="#afb1b3"/></svg>
<div style="position:absolute;left:2676px;top:66px;width:2px;height:40px;background:#515355;"></div>
<svg style="position:absolute;left:2694px;top:74px;" width="32" height="28" viewBox="2694 74 32 28"><path d="M2696 76h10.700l2.800 3.800h14.500v4.100h-8.100v8.100h-7.900v4h-12z" fill="#afb1b3"/><rect x="2718.100" y="86.100" width="5.900" height="5.800" fill="#3592c4"/><rect x="2710" y="94" width="6.100" height="6" fill="#3592c4"/><rect x="2718.100" y="94" width="5.900" height="6" fill="#3592c4"/></svg>
<div style="position:absolute;left:2742px;top:66px;width:2px;height:40px;background:#515355;"></div>
<svg style="position:absolute;left:2760px;top:72px;" width="32" height="28" viewBox="2760 72 32 28"><rect x="2762.900" y="75" width="26.100" height="22" fill="none" stroke="#afb1b3" stroke-width="2"/><rect x="2761.900" y="74" width="28.100" height="6" fill="#afb1b3"/><polygon points="2767.800,82.200 2776.900,87.900 2767.800,94" fill="#499c54"/></svg>
<svg style="position:absolute;left:2810px;top:68px;" width="36" height="36" viewBox="2810 68 36 36"><circle cx="2825.300" cy="83.500" r="9.700" stroke="#afb1b3" stroke-width="4" fill="none"/><path d="M2832.400 90.600l8.200 7.900" stroke="#afb1b3" stroke-width="4.600" fill="none"/></svg>
<svg style="position:absolute;left:61.2px;top:126.9px;" width="34" height="34" viewBox="0 0 34 34"><circle cx="17" cy="17" r="14.1" fill="#408ba5"/><path d="M21.200 13.900A5.200 5.200 0 1 0 21.200 20.300" stroke="#23373f" stroke-width="2.100" fill="none"/><rect x="22.900" y="25.100" width="10.100" height="8.100" fill="#9ba8b2"/><path d="M25.700 25.500v-3.300a2 2 0 0 1 4 0v3.300" stroke="#9ba8b2" stroke-width="1.700" fill="none"/></svg>
<div class="t" style="font-family:'Liberation Sans', sans-serif;font-size:26px;line-height:31.20px;color:#bbbbbb;letter-spacing:-0.203px;white-space:pre;position:absolute;left:103.05px;top:128.29px;">AutowiredAnnotationBeanPostProcessor.java</div>
<svg style="position:absolute;left:634px;top:134.1px;" width="16" height="16" viewBox="0 0 16 16"><path d="M1.100 1.100L14.900 14.900M14.900 1.100L1.100 14.900" stroke="#6f7577" stroke-width="1.900" fill="none"/></svg>
<svg style="position:absolute;left:678.5px;top:126.9px;" width="34" height="34" viewBox="0 0 34 34"><circle cx="17" cy="17" r="14.1" fill="#408ba5"/><path d="M21.200 13.900A5.200 5.200 0 1 0 21.200 20.300" stroke="#23373f" stroke-width="2.100" fill="none"/><rect x="22.900" y="25.100" width="10.100" height="8.100" fill="#9ba8b2"/><path d="M25.700 25.500v-3.300a2 2 0 0 1 4 0v3.300" stroke="#9ba8b2" stroke-width="1.700" fill="none"/></svg>
<div class="t" style="font-family:'Liberation Sans', sans-serif;font-size:26px;line-height:31.20px;color:#bbbbbb;letter-spacing:-0.263px;white-space:pre;position:absolute;left:719.20px;top:128.29px;">CommonAnnotationBeanPostProcessor.java</div>
<svg style="position:absolute;left:1238px;top:134.1px;" width="16" height="16" viewBox="0 0 16 16"><path d="M1.100 1.100L14.900 14.900M14.900 1.100L1.100 14.900" stroke="#6f7577" stroke-width="1.900" fill="none"/></svg>
<svg style="position:absolute;left:1283px;top:126.9px;" width="34" height="34" viewBox="0 0 34 34"><circle cx="17" cy="17" r="14.1" fill="#408ba5"/><path d="M21.200 13.900A5.200 5.200 0 1 0 21.200 20.300" stroke="#23373f" stroke-width="2.100" fill="none"/><rect x="22.900" y="25.100" width="10.100" height="8.100" fill="#9ba8b2"/><path d="M25.700 25.500v-3.300a2 2 0 0 1 4 0v3.300" stroke="#9ba8b2" stroke-width="1.700" fill="none"/></svg>
<div class="t" style="font-family:'Liberation Sans', sans-serif;font-size:26px;line-height:31.20px;color:#bbbbbb;letter-spacing:-0.195px;white-space:pre;position:absolute;left:1323.22px;top:128.29px;">InitDestroyAnnotationBeanPostProcessor.java</div>
<svg style="position:absolute;left:1862.5px;top:134.1px;" width="16" height="16" viewBox="0 0 16 16"><path d="M1.100 1.100L14.900 14.900M14.900 1.100L1.100 14.900" stroke="#6f7577" stroke-width="1.900" fill="none"/></svg>
<svg style="position:absolute;left:1907.4px;top:126.9px;" width="34" height="34" viewBox="0 0 34 34"><circle cx="17" cy="17" r="14.1" fill="#408ba5"/><path d="M21.200 13.900A5.200 5.200 0 1 0 21.200 20.300" stroke="#23373f" stroke-width="2.100" fill="none"/><rect x="22.900" y="25.100" width="10.100" height="8.100" fill="#9ba8b2"/><path d="M25.700 25.500v-3.300a2 2 0 0 1 4 0v3.300" stroke="#9ba8b2" stroke-width="1.700" fill="none"/></svg>
<div class="t" style="font-family:'Liberation Sans', sans-serif;font-size:26px;line-height:31.20px;color:#bbbbbb;letter-spacing:-0.239px;white-space:pre;position:absolute;left:1947.50px;top:128.29px;">InitDestroyAnnotationBeanPostProcessor.class</div>
<svg style="position:absolute;left:2494.3px;top:134.1px;" width="16" height="16" viewBox="0 0 16 16"><path d="M1.100 1.100L14.900 14.900M14.900 1.100L1.100 14.900" stroke="#6f7577" stroke-width="1.900" fill="none"/></svg>
<div class="t" style="font-family:'Liberation Sans', sans-serif;font-size:24px;line-height:28.80px;color:#bbbbbb;letter-spacing:-0.242px;white-space:pre;position:absolute;left:13.28px;top:232.93px;transform-origin:0 0;transform:rotate(-90deg);"><u>1</u>: Project</div>
<svg style="position:absolute;left:12px;top:242px;" width="26" height="22" viewBox="12 242 26 22"><path d="M13.950 243.900h9.350l2 3.900h10.800v14.200h-22.150z" fill="#afb1b3"/></svg>
<div class="t" style="font-family:'Liberation Sans', sans-serif;font-size:24px;line-height:28.80px;color:#bbbbbb;letter-spacing:-0.091px;white-space:pre;position:absolute;left:13.28px;top:432.27px;transform-origin:0 0;transform:rotate(-90deg);"><u>7</u>: Structure</div>
<svg style="position:absolute;left:14px;top:442px;" width="22" height="22" viewBox="14 442 22 22"><rect x="26.100" y="444" width="8" height="8" fill="#afb1b3"/><rect x="16" y="454.100" width="8.100" height="8" fill="#afb1b3"/><rect x="26.100" y="454.100" width="8" height="8" fill="#afb1b3"/></svg>
<div class="t" style="font-family:'Liberation Sans', sans-serif;font-size:24px;line-height:28.80px;color:#bbbbbb;letter-spacing:0.526px;white-space:pre;position:absolute;left:13.28px;top:594.34px;transform-origin:0 0;transform:rotate(-90deg);">Commit</div>
<svg style="position:absolute;left:10px;top:604px;" width="30" height="20" viewBox="10 604 30 20"><circle cx="25" cy="614" r="6" stroke="#afb1b3" stroke-width="4.200" fill="none"/><rect x="11.800" y="612" width="7.500" height="4.100" fill="#afb1b3"/><rect x="30.700" y="612" width="7.400" height="4.100" fill="#afb1b3"/></svg>
<div class="t" style="font-family:'Liberation Sans', sans-serif;font-size:24px;line-height:28.80px;color:#bbbbbb;letter-spacing:-0.391px;white-space:pre;position:absolute;left:13.28px;top:1549.26px;transform-origin:0 0;transform:rotate(-90deg);"><u>2</u>: Favorites</div>
<svg style="position:absolute;left:10px;top:1554px;" width="30" height="30" viewBox="10 1554 30 30"><polygon points="25,1556 28.300,1564.700 38,1565.300 30.900,1571.300 33,1581 25,1576.200 17,1581 18.800,1571.300 11.900,1565.300 21.600,1564.700" fill="#afb1b3"/></svg>
<div class="t" style="font-family:'Liberation Sans', sans-serif;font-size:31px;line-height:37.20px;color:#b6b6b6;letter-spacing:0.000px;white-space:pre;position:absolute;font-weight:700;font-style:italic;left:2824.25px;top:128.66px;">m</div>
<div class="t" style="font-family:'Liberation Sans', sans-serif;font-size:24px;line-height:28.80px;color:#bbbbbb;letter-spacing:0.263px;white-space:pre;position:absolute;left:2847.22px;top:170.30px;transform-origin:0 0;transform:rotate(90deg);">Maven</div>
<svg style="position:absolute;left:2824px;top:284px;" width="26" height="26" viewBox="2824 284 26 26"><circle cx="2837.050" cy="296.800" r="11.200" fill="#afb1b3"/><polygon points="2840.700,288.900 2844.300,292 2845.800,296.800 2843.700,302.600 2840.400,300.800 2840.400,296.800 2832.800,296.800 2832.800,295 2836.400,293.200 2836.400,291.400 2839.800,290.800" fill="#3c3f41"/><polygon points="2828.100,295.200 2833.400,299.900 2835.800,305.300 2832.200,304.100 2828.600,299.300" fill="#3c3f41"/></svg>
<div class="t" style="font-family:'Liberation Sans', sans-serif;font-size:24px;line-height:28.80px;color:#bbbbbb;letter-spacing:0.278px;white-space:pre;position:absolute;left:2847.22px;top:317.10px;transform-origin:0 0;transform:rotate(90deg);">RestfulTool</div>
<svg style="position:absolute;left:2824px;top:478px;" width="26" height="29" viewBox="2824 478 26 29"><path d="M2825.800 483.900a11.150 3.600 0 0 1 22.300 0v17.400a11.150 3.600 0 0 1 -22.300 0z" fill="#afb1b3"/>
<path d="M2825.800 484.400a11.150 3.600 0 0 0 22.300 0M2825.800 490.200a11.150 3.600 0 0 0 22.300 0M2825.800 495.700a11.150 3.600 0 0 0 22.300 0" stroke="#3c3f41" stroke-width="1.300" fill="none"/></svg>
<div class="t" style="font-family:'Liberation Sans', sans-serif;font-size:24px;line-height:28.80px;color:#bbbbbb;letter-spacing:-0.585px;white-space:pre;position:absolute;left:2847.22px;top:513.00px;transform-origin:0 0;transform:rotate(90deg);">Database</div>
<svg style="position:absolute;left:2824px;top:648px;" width="26" height="29" viewBox="2824 648 26 29"><circle cx="2836.900" cy="654.900" r="3.900" fill="#afb1b3"/><ellipse cx="2836.900" cy="669.100" rx="5" ry="4.900" fill="#afb1b3"/><ellipse cx="2836.900" cy="661.600" rx="2.600" ry="4" fill="#afb1b3"/>
<g stroke="#afb1b3" stroke-width="2" fill="none"><path d="M2827 661.600h19.900"/><path d="M2836.900 661.600c-4-1.500-7.500-4-9.300-7.800M2836.900 661.600c4-1.500 7.500-4 9.300-7.800"/><path d="M2835.500 663.500l-7.600 4.300v6.300M2838.300 663.500l7.600 4.300v6.300"/></g></svg>
<div class="t" style="font-family:'Liberation Sans', sans-serif;font-size:24px;line-height:28.80px;color:#bbbbbb;letter-spacing:0.792px;white-space:pre;position:absolute;left:2847.22px;top:684.64px;transform-origin:0 0;transform:rotate(90deg);">Ant</div>
<svg style="position:absolute;left:64px;top:1616px;" width="28" height="30" viewBox="64 1616 28 30"><rect x="67.850" y="1620.100" width="4.100" height="21.700" fill="#afb1b3"/><path d="M71 1633.800h10.900v-6.500" stroke="#afb1b3" stroke-width="4.200" fill="none"/><polygon points="75.250,1627.750 89.050,1627.750 82,1620.100" fill="#afb1b3"/></svg>
<div class="t" style="font-family:'Liberation Sans', sans-serif;font-size:24px;line-height:28.80px;color:#bbbbbb;letter-spacing:-0.496px;white-space:pre;position:absolute;left:98.11px;top:1617.88px;"><u>9</u>: Git</div>
<svg style="position:absolute;left:194px;top:1618px;" width="24" height="26" viewBox="194 1618 24 26"><polygon points="197.900,1620.900 213.700,1630.600 197.900,1641" fill="#afb1b3"/></svg>
<div class="t" style="font-family:'Liberation Sans', sans-serif;font-size:24px;line-height:28.80px;color:#bbbbbb;letter-spacing:-0.659px;white-space:pre;position:absolute;left:227.20px;top:1617.88px;"><u>4</u>: Run</div>
<svg style="position:absolute;left:338px;top:1620px;" width="24" height="22" viewBox="338 1620 24 22"><g fill="#afb1b3"><rect x="340.100" y="1622.300" width="4.500" height="3.400"/><rect x="346.600" y="1622.300" width="13.400" height="3.400"/><rect x="340.100" y="1628.600" width="4.500" height="3.400"/><rect x="346.600" y="1628.600" width="13.400" height="3.400"/><rect x="340.100" y="1635.300" width="4.500" height="3.400"/><rect x="346.600" y="1635.300" width="13.400" height="3.400"/></g></svg>
<div class="t" style="font-family:'Liberation Sans', sans-serif;font-size:24px;line-height:28.80px;color:#bbbbbb;letter-spacing:-0.492px;white-space:pre;position:absolute;left:369.14px;top:1617.88px;"><u>6</u>: TODO</div>
<svg style="position:absolute;left:506px;top:1620px;" width="26" height="22" viewBox="506 1620 26 22"><g fill="#afb1b3"><rect x="508.200" y="1622.300" width="21.600" height="3.400"/><rect x="508.200" y="1628.600" width="14.500" height="3.400"/><rect x="508.200" y="1635.300" width="18.500" height="3.400"/></g></svg>
<div class="t" style="font-family:'Liberation Sans', sans-serif;font-size:24px;line-height:28.80px;color:#bbbbbb;letter-spacing:-0.841px;white-space:pre;position:absolute;left:539.44px;top:1617.88px;"><u>0</u>: Messages</div>
<svg style="position:absolute;left:708px;top:1616px;" width="32" height="30" viewBox="708 1616 32 30"><g transform="translate(710.200 1618.900) scale(0.854) translate(-1666 -72)"><polygon points="1666,83.200 1677.100,72.200 1684,72 1684,73.600 1677.800,78.400 1684.500,83.900 1686.900,84.900 1696.200,94.700 1691.400,100 1680.900,89.500 1681.100,87.800 1674.400,82 1670.400,87.100" fill="#afb1b3"/></g></svg>
<div class="t" style="font-family:'Liberation Sans', sans-serif;font-size:24px;line-height:28.80px;color:#bbbbbb;letter-spacing:0.227px;white-space:pre;position:absolute;left:743.76px;top:1617.88px;">Build</div>
<svg style="position:absolute;left:834px;top:1616px;" width="32" height="28" viewBox="834 1616 32 28"><path d="M861.200 1618.900c1.200 7.500-.500 15.800-8.500 19.300-4.500 2-9.500 1.500-13.200-.800 6-1 11.500-3.800 15-8.800-5 3.800-10.500 5.300-16.300 5.300-1.800-4.300-.800-8.800 3.300-11.300 5.500-3.200 14.500-1 19.700-3.700z" fill="#afb1b3"/></svg>
<div class="t" style="font-family:'Liberation Sans', sans-serif;font-size:24px;line-height:28.80px;color:#bbbbbb;letter-spacing:0.043px;white-space:pre;position:absolute;left:869.64px;top:1617.88px;">Spring</div>
<svg style="position:absolute;left:982px;top:1617px;" width="28" height="26" viewBox="982 1617 28 26"><rect x="984.100" y="1619.900" width="22" height="20.100" fill="#afb1b3"/><path d="M987.800 1624.800l5.600 4.600-5.600 4.600" stroke="#3c3f41" stroke-width="2.200" fill="none"/><rect x="994.700" y="1634.300" width="7.500" height="1.900" fill="#3c3f41"/></svg>
<div class="t" style="font-family:'Liberation Sans', sans-serif;font-size:24px;line-height:28.80px;color:#bbbbbb;letter-spacing:0.149px;white-space:pre;position:absolute;left:1016.42px;top:1617.88px;">Terminal</div>
<svg style="position:absolute;left:2655px;top:1617px;" width="28" height="28" viewBox="0 0 28 28"><path d="M14 0.500a13.500 13.500 0 1 0 0 27h13.500v-13.500a13.500 13.500 0 0 0 -13.500 -13.500z" fill="#499c54"/></svg>
<svg style="position:absolute;left:2662px;top:1621px;" width="12" height="20" viewBox="2662 1621 12 20"><path d="M2668.200 1623.800h3.100v14.400h-3.100v-10.900l-3.700 1.900v-2.700z" fill="#f2f2f2"/></svg>
<div class="t" style="font-family:'Liberation Sans', sans-serif;font-size:24px;line-height:28.80px;color:#bbbbbb;letter-spacing:-0.418px;white-space:pre;position:absolute;left:2689.66px;top:1617.68px;">Event Log</div>
<svg style="position:absolute;left:12px;top:1658px;" width="28" height="28" viewBox="12 1658 28 28"><rect x="18.900" y="1661" width="18.100" height="18" fill="none" stroke="#afb1b3" stroke-width="2"/><path d="M14.900 1664.100v19h19" fill="none" stroke="#afb1b3" stroke-width="2"/></svg>
<div class="t" style="font-family:'Liberation Sans', sans-serif;font-size:26.2px;line-height:31.44px;color:#bbbbbb;letter-spacing:-0.289px;white-space:pre;position:absolute;left:55.68px;top:1656.20px;">Build completed successfully in 1 s 490 ms (1 hour ago)</div>
<div class="t" style="font-family:'Liberation Sans', sans-serif;font-size:26.2px;line-height:31.44px;color:#a8a8a8;letter-spacing:-0.934px;white-space:pre;position:absolute;left:2309.74px;top:1656.20px;">364:73</div>
<div class="t" style="font-family:'Liberation Sans', sans-serif;font-size:26.2px;line-height:31.44px;color:#8c8c8c;letter-spacing:-4.722px;white-space:pre;position:absolute;left:2409.34px;top:1656.20px;">LF</div>
<div class="t" style="font-family:'Liberation Sans', sans-serif;font-size:26.2px;line-height:31.44px;color:#8c8c8c;letter-spacing:-0.631px;white-space:pre;position:absolute;left:2459.04px;top:1656.20px;">UTF-8</div>
<div style="position:absolute;left:2856px;top:0px;width:2px;height:1693px;background:#bdbdbd;"></div>
<div style="position:absolute;left:2562px;top:1652px;width:296px;height:41px;background:#ffffff;"></div>
<div style="position:absolute;left:2562px;top:1651px;width:296px;height:1px;background:#6d7580;"></div>
<div style="position:absolute;left:2562px;top:1652px;width:296px;height:2px;background:#b4c8e4;"></div>
<div style="position:absolute;left:2812px;top:1654px;width:46px;height:39px;background:linear-gradient(90deg,rgba(255,255,255,1),#f1eeff 45%,#fdf6e0 75%,#e9f0ff);"></div>
<svg style="position:absolute;left:2506px;top:1636px;" width="84" height="57" viewBox="2506 1636 84 57"><defs><linearGradient id="sg" x1="1" y1="0" x2="0" y2="1"><stop offset="0" stop-color="#fb7c48"/><stop offset="0.5" stop-color="#f6621f"/><stop offset="1" stop-color="#ef4c0c"/></linearGradient></defs><polygon points="2519.100,1659.900 2559.750,1649.200 2577.600,1700 2528.600,1700" fill="url(#sg)" stroke="url(#sg)" stroke-width="9.500" stroke-linejoin="round"/></svg>
<svg style="position:absolute;left:2510px;top:1640px;" width="72" height="53" viewBox="2510 1640 72 53"><path d="M2560.9 1655.3C2560.9 1655.3 2551.6 1655.1 2547.5 1655.6C2543.4 1656.1 2539.6 1657.1 2536.3 1658.3C2533.0 1659.5 2530.1 1661.1 2527.9 1662.8C2525.7 1664.5 2523.9 1666.9 2522.9 1668.4C2521.9 1669.9 2522.0 1670.5 2522.1 1671.8C2522.2 1673.1 2522.3 1675.0 2523.5 1676.2C2524.7 1677.4 2526.5 1678.4 2529.1 1679.0C2531.7 1679.6 2535.6 1679.9 2539.1 1679.9C2542.6 1679.9 2547.8 1679.0 2550.3 1679.0C2552.8 1679.0 2554.2 1680.1 2554.2 1680.1C2554.2 1680.1 2552.8 1682.5 2550.3 1683.5C2547.8 1684.5 2542.8 1685.8 2539.1 1686.3C2535.4 1686.8 2527.9 1686.8 2527.9 1686.8C2527.9 1686.8 2530.2 1694.0 2530.2 1694.0C2530.2 1694.0 2550.3 1694.0 2550.3 1694.0C2550.3 1694.0 2558.5 1690.8 2561.5 1689.1C2564.5 1687.3 2566.8 1685.5 2568.2 1683.5C2569.6 1681.5 2569.8 1679.1 2569.8 1677.3C2569.8 1675.5 2569.6 1674.2 2568.2 1672.9C2566.8 1671.6 2564.5 1670.2 2561.5 1669.5C2558.5 1668.8 2553.6 1669.1 2550.3 1669.0C2547.0 1668.9 2544.0 1669.3 2541.9 1669.0C2539.8 1668.7 2538.0 1667.3 2538.0 1667.3C2538.0 1667.3 2539.8 1664.7 2541.9 1663.9C2544.0 1663.1 2546.8 1662.6 2550.3 1662.3C2553.8 1662.0 2563.1 1662.0 2563.1 1662.0C2563.1 1662.0 2560.9 1655.3 2560.9 1655.3z" fill="#ffffff"/></svg>
<svg style="position:absolute;left:2586px;top:1662px;" width="36" height="31" viewBox="2586 1662 36 31"><rect x="2591.600" y="1670.700" width="23.700" height="11.600" rx="2.600" fill="none" stroke="#0a6ddc" stroke-width="3.400"/><rect x="2602" y="1665" width="3.100" height="27" rx="1.500" fill="#0a6ddc"/></svg>
<svg style="position:absolute;left:2640px;top:1662px;" width="30" height="31" viewBox="2640 1662 30 31"><circle cx="2645.600" cy="1672.300" r="3.200" fill="#0a6ddc"/><path d="M2656.500 1679.500a3.400 3.400 0 1 1 6.300 1.500c-.700 3.500-3 6.500-6.500 9 1.500-2.500 2.300-4.500 2.300-6.500a3.400 3.400 0 0 1 -2.100-4z" fill="#0a6ddc"/></svg>
<svg style="position:absolute;left:2684px;top:1660px;" width="32" height="33" viewBox="2684 1660 32 33"><rect x="2695" y="1662.800" width="9.500" height="18.500" rx="4.700" fill="#0a6ddc"/><path d="M2689.800 1677.500a10 10 0 0 0 20 0" stroke="#0a6ddc" stroke-width="2.800" fill="none"/><rect x="2698.300" y="1687.500" width="2.900" height="4" fill="#0a6ddc"/><rect x="2696" y="1690.800" width="7.500" height="2.200" fill="#0a6ddc"/></svg>
<svg style="position:absolute;left:2732px;top:1664px;" width="34" height="29" viewBox="2732 1664 34 29"><rect x="2734" y="1666.600" width="29" height="23.300" rx="3" fill="#0a6ddc"/><g fill="#ffffff"><rect x="2737.500" y="1670.500" width="4" height="3.600"/><rect x="2743.500" y="1670.500" width="4" height="3.600"/><rect x="2749.500" y="1670.500" width="4" height="3.600"/><rect x="2755.500" y="1670.500" width="4" height="3.600"/><rect x="2737.500" y="1676.500" width="4" height="3.600"/><rect x="2743.500" y="1676.500" width="4" height="3.600"/><rect x="2749.500" y="1676.500" width="4" height="3.600"/><rect x="2755.500" y="1676.500" width="4" height="3.600"/><rect x="2737.500" y="1682.500" width="5" height="3.600"/><rect x="2744.500" y="1682.500" width="15" height="3.600"/></g></svg>
<svg style="position:absolute;left:2780px;top:1662px;" width="34" height="31" viewBox="2780 1662 34 31"><path d="M2789 1665.200c2 2.500 5.500 2.500 7.500 2.500s5.500 0 7.500-2.500l7 4.500-3 5.500-3.500-1.500v16.500a1.800 1.800 0 0 1 -1.800 1.800h-12.400a1.800 1.800 0 0 1 -1.800-1.800v-16.500l-3.500 1.500-3-5.500z" fill="#0a6ddc"/></svg>
<svg style="position:absolute;left:2828px;top:1662px;" width="30" height="31" viewBox="2828 1662 30 31"><g fill="#0a6ddc"><rect x="2831.300" y="1666.100" width="11.400" height="11.400" rx="3"/><rect x="2845.500" y="1666.100" width="11.400" height="11.400" rx="3"/><rect x="2831.300" y="1680.400" width="11.400" height="11.400" rx="3"/><rect x="2845.500" y="1680.400" width="11.400" height="11.400" rx="3"/></g><rect x="2849.300" y="1669.900" width="3.800" height="3.800" fill="#ffffff"/></svg>
<div style="position:absolute;left:2632px;top:1662.500px;font-family:'Liberation Sans', sans-serif;font-size:18.600px;line-height:23px;color:#828282;white-space:pre;letter-spacing:-0.400px;text-shadow:0 0 1.500px rgba(255,255,255,0.700);opacity:0.920;">CSDN @</div>
<svg style="position:absolute;left:2706.5px;top:1665px;" width="19" height="19" viewBox="0 0 18 18"><path d="M4 1h10v7h-10z M6.500 11L2.500 17 M11.500 11L16 17" stroke="#ffffff" stroke-width="2.600" fill="none" opacity="0.400"/><path d="M4 1h10v7h-10z M6.500 11L2.500 17 M11.500 11L16 17" stroke="#828282" stroke-width="1.500" fill="none" opacity="0.920"/></svg>
<svg style="position:absolute;left:2725px;top:1665px;" width="19" height="19" viewBox="0 0 18 18"><path d="M1.500 1.500h15v15.500h-15z M4.500 7h9 M9 3.500v3.500L4.500 14 M9 7L13.500 14" stroke="#ffffff" stroke-width="2.600" fill="none" opacity="0.400"/><path d="M1.500 1.500h15v15.500h-15z M4.500 7h9 M9 3.500v3.500L4.500 14 M9 7L13.500 14" stroke="#828282" stroke-width="1.500" fill="none" opacity="0.920"/></svg>
<svg style="position:absolute;left:2744px;top:1665px;" width="19" height="19" viewBox="0 0 18 18"><path d="M4 1.500l1.500 2 M1.500 6h13.500v9.500c0 1-1 1.500-3 1.500 M8.500 1C8.500 8 6 14 1.500 17 M9 10l1.500 2.500" stroke="#ffffff" stroke-width="2.600" fill="none" opacity="0.400"/><path d="M4 1.500l1.500 2 M1.500 6h13.500v9.500c0 1-1 1.500-3 1.500 M8.500 1C8.500 8 6 14 1.500 17 M9 10l1.500 2.500" stroke="#828282" stroke-width="1.500" fill="none" opacity="0.920"/></svg>
<svg style="position:absolute;left:2764.5px;top:1665px;" width="19" height="19" viewBox="0 0 18 18"><path d="M5 1L1.500 8 M3.800 5.500V17 M9.500 1L7 6 M8.500 4h8l-1.500 3 M12 4v11.500c0 1-.800 1.500-2 1.500 M9 9l-2 5 M15 9l2 5" stroke="#ffffff" stroke-width="2.600" fill="none" opacity="0.400"/><path d="M5 1L1.500 8 M3.800 5.500V17 M9.500 1L7 6 M8.500 4h8l-1.500 3 M12 4v11.500c0 1-.800 1.500-2 1.500 M9 9l-2 5 M15 9l2 5" stroke="#828282" stroke-width="1.500" fill="none" opacity="0.920"/></svg>
<svg style="position:absolute;left:2784.5px;top:1665px;" width="19" height="19" viewBox="0 0 18 18"><path d="M1 2h16 M9 2L7.500 6 M2 17V6h14v9.500c0 1-.800 1.500-2 1.500 M6.500 6v9 M11 6v9" stroke="#ffffff" stroke-width="2.600" fill="none" opacity="0.400"/><path d="M1 2h16 M9 2L7.500 6 M2 17V6h14v9.500c0 1-.800 1.500-2 1.500 M6.500 6v9 M11 6v9" stroke="#828282" stroke-width="1.500" fill="none" opacity="0.920"/></svg>
<svg style="position:absolute;left:2805.5px;top:1665px;" width="19" height="19" viewBox="0 0 18 18"><path d="M2 1.500l1.500 1.500 M1 6.500l1.500 1.500 M1 16.500l3-5 M7 1h8.500v7h-8.500z M7 4.500h8.500 M6.500 11h10v5.500 M6.500 11v5.500 M9.800 11v5.500 M13.200 11v5.500 M5 17h12.500" stroke="#ffffff" stroke-width="2.600" fill="none" opacity="0.400"/><path d="M2 1.500l1.500 1.500 M1 6.500l1.500 1.500 M1 16.500l3-5 M7 1h8.500v7h-8.500z M7 4.500h8.500 M6.500 11h10v5.500 M6.500 11v5.500 M9.800 11v5.500 M13.200 11v5.500 M5 17h12.500" stroke="#828282" stroke-width="1.500" fill="none" opacity="0.920"/></svg>
<svg style="position:absolute;left:2824px;top:1665px;" width="19" height="19" viewBox="0 0 18 18"><path d="M4 1h9l-4 3 M2 6h14l-2 2.500 M9 4v5 M6 7l-3.500 3 M1 12h16 M9 9.500V18 M9 12L3 17 M9 12l6 5" stroke="#ffffff" stroke-width="2.600" fill="none" opacity="0.400"/><path d="M4 1h9l-4 3 M2 6h14l-2 2.500 M9 4v5 M6 7l-3.500 3 M1 12h16 M9 9.500V18 M9 12L3 17 M9 12l6 5" stroke="#828282" stroke-width="1.500" fill="none" opacity="0.920"/></svg>
</div>
</body></html>
